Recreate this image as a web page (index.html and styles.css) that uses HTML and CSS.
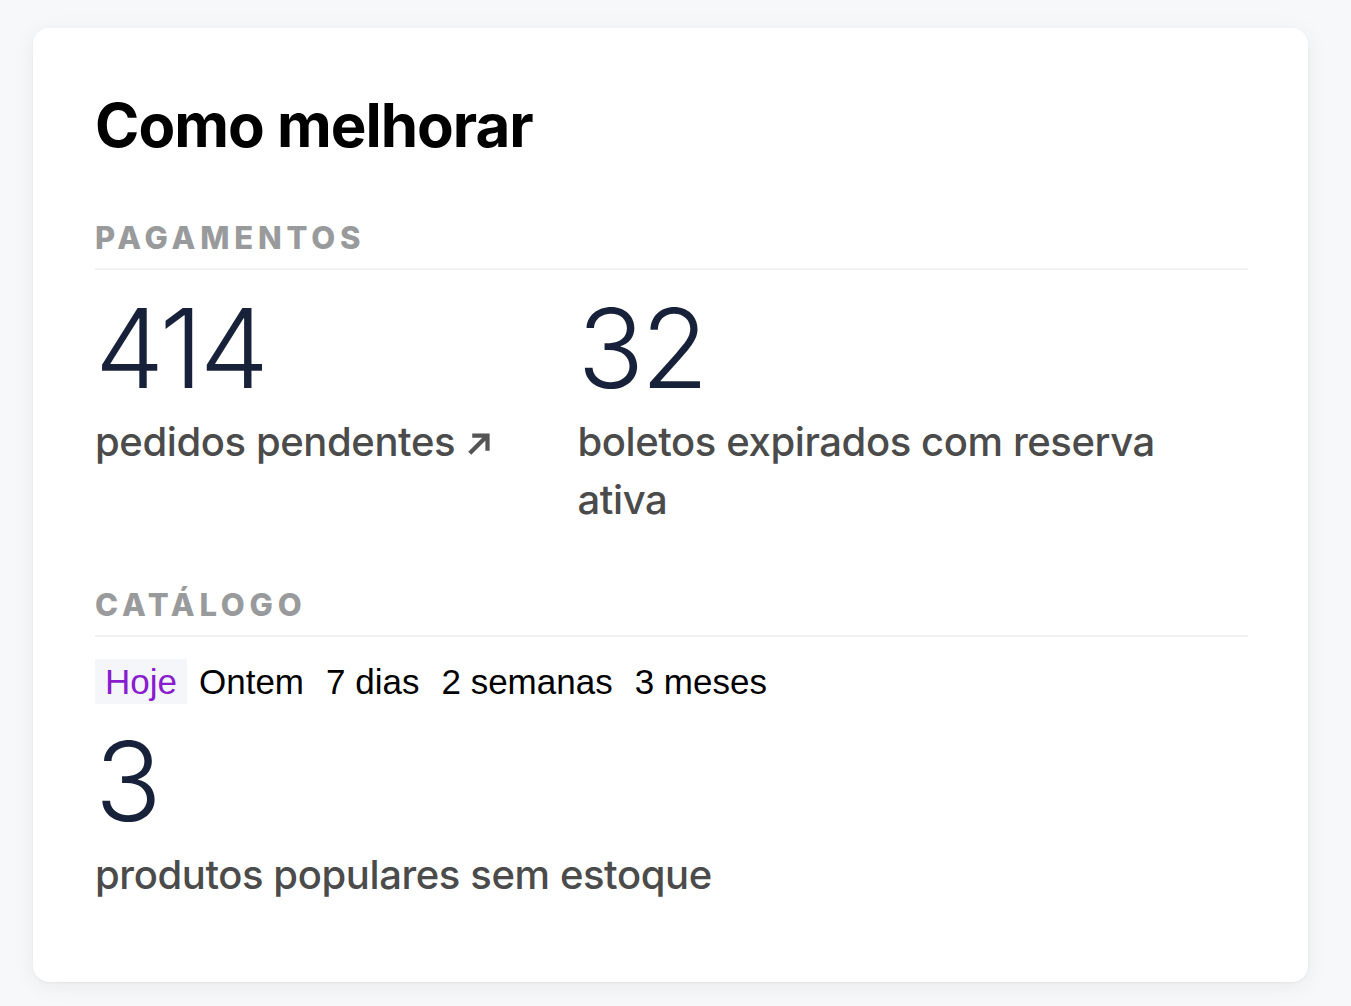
FILE: index.html
```html
<!DOCTYPE html>
<html lang="pt-BR">
<head>
<meta charset="utf-8">
<title>Como melhorar</title>
<link rel="stylesheet" href="styles.css">
</head>
<body>
<main class="card">
  <h1 class="title">Como melhorar</h1>

  <section class="section">
    <h2 class="section-label">PAGAMENTOS</h2>
    <div class="metrics">
      <div class="metric">
        <div class="metric-value">414</div>
        <a class="metric-label link" href="#">pedidos pendentes <svg class="arrow" viewBox="0 0 24 24" width="30" height="30" aria-hidden="true"><path d="M5 19 L17 7 M7.5 6 H18 V16.5" fill="none" stroke="currentColor" stroke-width="3.4" stroke-linecap="square"/></svg></a>
      </div>
      <div class="metric metric-wide">
        <div class="metric-value">32</div>
        <div class="metric-label">boletos expirados com reserva ativa</div>
      </div>
    </div>
  </section>

  <section class="section">
    <h2 class="section-label">CATÁLOGO</h2>
    <div class="tabs">
      <button class="tab active">Hoje</button>
      <button class="tab">Ontem</button>
      <button class="tab">7 dias</button>
      <button class="tab">2 semanas</button>
      <button class="tab">3 meses</button>
    </div>
    <div class="metric metric-spaced">
      <div class="metric-value">3</div>
      <div class="metric-label">produtos populares sem estoque</div>
    </div>
  </section>
</main>
</body>
</html>
```

FILE: styles.css
```css
html, body {
  margin: 0;
  padding: 0;
  background: #f7f8fa;
}
body {
  padding: 28px 43px 24px 33px;
  font-family: "Inter", "Lato", sans-serif;
}
.card {
  background: #fff;
  border-radius: 16px;
  box-shadow: 0 4px 24px rgba(0, 0, 0, 0.06), 0 1px 3px rgba(0,0,0,0.05);
  padding: 62px 60px 78px 62px;
}
.title {
  margin: 0;
  font-family: "Inter", sans-serif;
  font-weight: 700;
  font-size: 60px;
  line-height: 70px;
  letter-spacing: -1px;
  color: #000;
}
.section {
  margin-top: 60px;
}
.section + .section {
  margin-top: 58px;
}
.section-label {
  margin: 0;
  font-family: "Inter", sans-serif;
  font-weight: 800;
  font-size: 31px;
  line-height: 36px;
  letter-spacing: 4.8px;
  color: #999a9c;
  padding-bottom: 12px;
  border-bottom: 2px solid #f1f1f3;
}
.metrics {
  display: flex;
  gap: 82px;
  margin-top: 13px;
}
.metric-wide {
  flex: 1;
}
.metric-wide .metric-label {
  max-width: 640px;
}
.metric-spaced {
  margin-top: 12px;
}
.metric-value {
  font-family: "Inter", sans-serif;
  font-weight: 300;
  font-size: 110px;
  line-height: 130px;
  letter-spacing: -3px;
  color: #17213a;
}
.metric-label {
  display: block;
  font-family: "Inter", sans-serif;
  font-weight: 500;
  font-size: 40px;
  line-height: 58px;
  letter-spacing: -0.4px;
  color: #4b4b4b;
  text-decoration: none;
}
.arrow {
  vertical-align: -2px;
  color: #555;
}
.tabs {
  display: flex;
  gap: 2px;
  margin-top: 22px;
}
.tab {
  font-family: "Liberation Sans", Arial, sans-serif;
  font-size: 35px;
  line-height: 45px;
  padding: 0 10px;
  border: 0;
  background: transparent;
  color: #000;
}
.tab.active {
  background: #f5f6fa;
  color: #8a1ccf;
}
```
